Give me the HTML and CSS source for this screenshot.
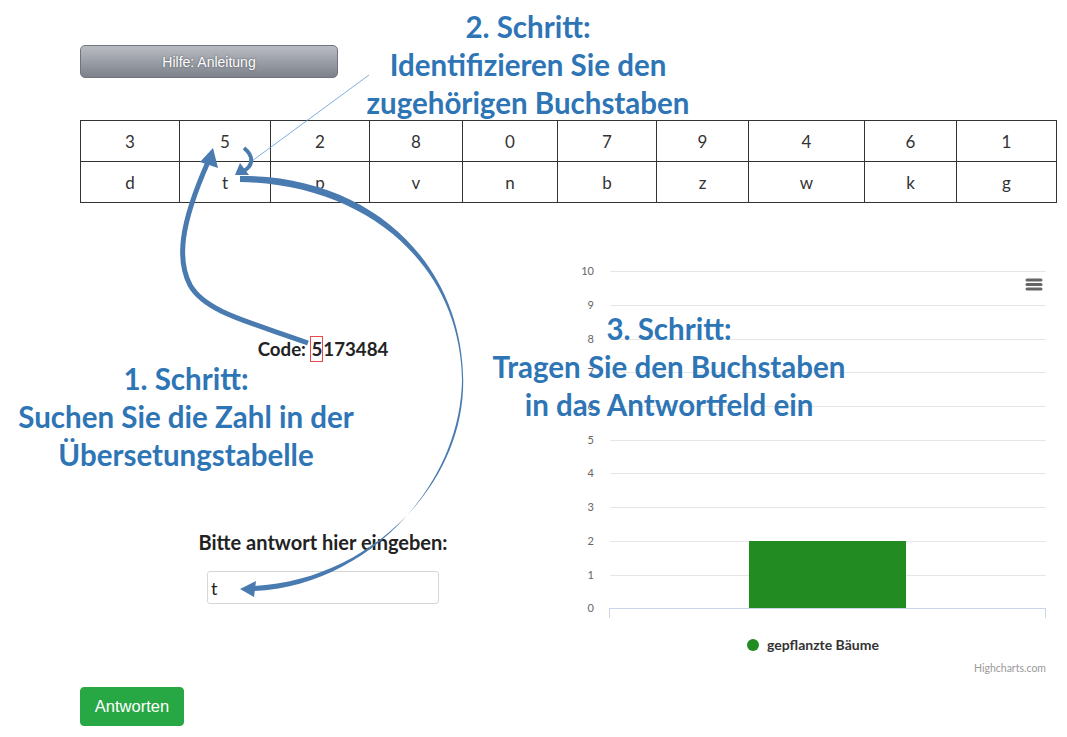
FILE: index.html
```html
<!DOCTYPE html>
<html lang="de">
<head>
<meta charset="utf-8">
<link rel="stylesheet" href="styles.css">
</head>
<body>
<div class="page">
  <div class="toprow">
    <button class="help-btn">Hilfe: Anleitung</button>
  </div>
  <table class="codes">
    <tr><td class="c1">3</td><td class="c2">5</td><td class="c3">2</td><td class="c4">8</td><td class="c5">0</td><td class="c6">7</td><td class="c7">9</td><td class="c8">4</td><td class="c9">6</td><td class="c10">1</td></tr>
    <tr><td>d</td><td>t</td><td>p</td><td>v</td><td>n</td><td>b</td><td>z</td><td>w</td><td>k</td><td>g</td></tr>
  </table>
  <div class="main">
    <div class="left">
      <div class="code">Code: <span class="hl">5</span>173484</div>
      <div class="prompt">Bitte antwort hier eingeben:</div>
      <div class="answer">t</div>
    </div>
    <svg class="chart" width="490" height="430" viewBox="0 0 490 430">
      <g stroke="#e6e6e6" stroke-width="1">
        <line x1="44" y1="16.5" x2="480" y2="16.5"/>
        <line x1="44" y1="50.5" x2="480" y2="50.5"/>
        <line x1="44" y1="84.5" x2="480" y2="84.5"/>
        <line x1="44" y1="117.5" x2="480" y2="117.5"/>
        <line x1="44" y1="151.5" x2="480" y2="151.5"/>
        <line x1="44" y1="185.5" x2="480" y2="185.5"/>
        <line x1="44" y1="218.5" x2="480" y2="218.5"/>
        <line x1="44" y1="252.5" x2="480" y2="252.5"/>
        <line x1="44" y1="286.5" x2="480" y2="286.5"/>
        <line x1="44" y1="320.5" x2="480" y2="320.5"/>
      </g>
      <g class="ylab" text-anchor="end">
        <text x="28" y="20">10</text>
        <text x="28" y="54">9</text>
        <text x="28" y="88">8</text>
        <text x="28" y="121">7</text>
        <text x="28" y="155">6</text>
        <text x="28" y="189">5</text>
        <text x="28" y="222">4</text>
        <text x="28" y="256">3</text>
        <text x="28" y="290">2</text>
        <text x="28" y="324">1</text>
        <text x="28" y="357">0</text>
      </g>
      <rect x="183" y="286" width="157" height="67" fill="#228b22"/>
      <g stroke="#ccd6eb" stroke-width="1" fill="none">
        <line x1="43" y1="353.5" x2="480" y2="353.5"/>
        <line x1="43.5" y1="353" x2="43.5" y2="363"/>
        <line x1="479.5" y1="353" x2="479.5" y2="363"/>
      </g>
      <g stroke="#666" stroke-width="3" stroke-linecap="round">
        <line x1="461" y1="25" x2="475" y2="25"/>
        <line x1="461" y1="29.5" x2="475" y2="29.5"/>
        <line x1="461" y1="34" x2="475" y2="34"/>
      </g>
      <circle cx="187" cy="390" r="6" fill="#228b22"/>
      <text class="legend" x="201" y="395">gepflanzte Bäume</text>
      <text class="credits" x="480" y="417" text-anchor="end">Highcharts.com</text>
    </svg>
  </div>
  <button class="submit-btn">Antworten</button>

  <div class="note note2">2. Schritt:<br>Identifizieren Sie den<br>zugehörigen Buchstaben</div>
  <div class="note note1">1. Schritt:<br>Suchen Sie die Zahl in der<br>Übersetungstabelle</div>
  <div class="note note3">3. Schritt:<br>Tragen Sie den Buchstaben<br>in das Antwortfeld ein</div>

  <svg class="arrows" width="1067" height="737" viewBox="0 0 1067 737">
    <line x1="369" y1="75" x2="252" y2="161" stroke="#5b9bd5" stroke-width="0.8"/>
    <!-- arrow 1: code -> table 5 -->
    <path d="M308 343 C 250 322, 205 312, 190 285 C 177 260, 180 225, 208 162" fill="none" stroke="#4a7bb0" stroke-width="5"/>
    <polygon points="213,148 218,168 200,162" fill="#4a7bb0"/>
    <!-- arrow 2: 5 -> t -->
    <path d="M244 148 C 254 156, 254 166, 242 172" fill="none" stroke="#4a7bb0" stroke-width="4"/>
    <polygon points="235,175 240,163 249,175" fill="#4a7bb0"/>
    <!-- arrow 3: t -> input -->
    <path d="M240 176 C 370 175, 462 262, 463.2 380 C 464.5 488, 365 582, 252 586 L 252 591 C 362 588, 460 490, 462 380 C 460.5 266, 368 184, 240 182 Z" fill="#4a7bb0"/>
    <polygon points="240,589 256,581 254,597" fill="#4a7bb0"/>
  </svg>
</div>
</body>
</html>
```
FILE: styles.css
```css
* { box-sizing: border-box; }
html, body { margin: 0; padding: 0; background: #fff; }
body { font-family: Lato, "Open Sans", sans-serif; color: #333; }
.page { position: relative; width: 1067px; height: 737px; padding: 45px 11px 0 80px; overflow: hidden; }
.toprow { height: 33px; }
.help-btn {
  width: 258px; height: 33px; margin: 0; padding: 0;
  border: 1px solid #70747c; border-radius: 5px;
  background: linear-gradient(#b9bcc3, #7d818a);
  color: #fff; font: 14px "Liberation Sans", Arial, sans-serif;
  text-shadow: 0 0 2px #4a4d55;
}
.codes { margin-top: 42px; border-collapse: collapse; width: 976px; table-layout: fixed; }
.codes td { border: 1px solid #333; height: 41px; text-align: center; font-size: 17px; color: #333; padding: 0; }
.c1 { width: 99px; } .c2 { width: 91px; } .c3 { width: 99px; } .c4 { width: 93px; } .c5 { width: 95px; }
.c6 { width: 99px; } .c7 { width: 92px; } .c8 { width: 116px; } .c9 { width: 92px; } .c10 { width: 100px; }
.main { display: flex; margin-top: 52px; }
.left { width: 486px; display: flex; flex-direction: column; align-items: center; }
.code { margin-top: 81px; font-weight: 700; font-size: 18.7px; line-height: 26px; color: #222; }
.hl { display: inline-block; border: 1px solid #e84a4a; line-height: 24px; padding: 0; }
.prompt { margin-top: 168px; font-weight: 700; font-size: 20px; line-height: 24px; color: #222; }
.answer { margin-top: 17px; width: 232px; height: 33px; border: 1px solid #d6d6d6; border-radius: 3px; padding: 0 3px; font-size: 18px; line-height: 33px; color: #222; }
.chart { display: block; }
.ylab text { font: 11px Lato, sans-serif; fill: #666; }
.legend { font: 700 14px Lato, sans-serif; fill: #333; }
.credits { font: 10.5px Lato, sans-serif; fill: #999; }
.submit-btn {
  display: block; margin-top: 2px; width: 104px; height: 39px; padding: 0;
  background: #28a745; border: 1px solid #28a745; border-radius: 4px;
  color: #fff; font: 16.5px "Liberation Sans", Arial, sans-serif;
}
.note { position: absolute; font-weight: 700; font-size: 29.5px; line-height: 38px; color: #2e75b6; text-align: center; white-space: nowrap; }
.note2 { left: 328px; width: 400px; top: 8px; }
.note1 { left: -14px; width: 400px; top: 360px; }
.note3 { left: 469px; width: 400px; top: 310px; }
.arrows { position: absolute; left: 0; top: 0; pointer-events: none; }
```
